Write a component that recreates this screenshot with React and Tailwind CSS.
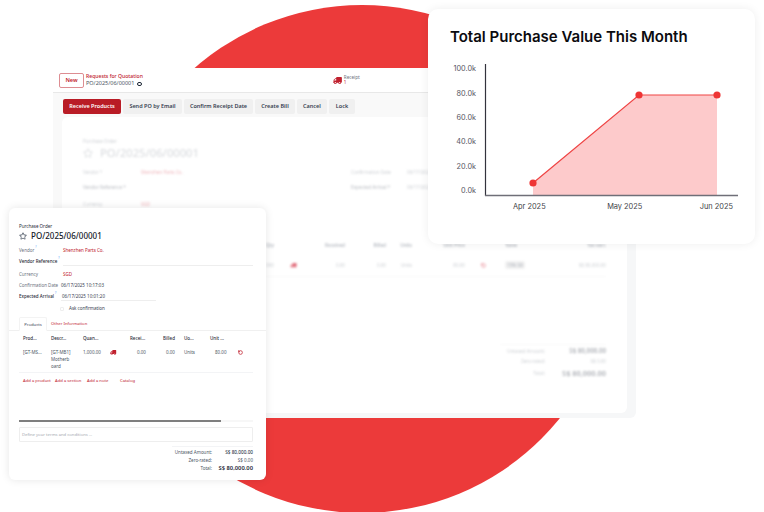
import React from "react";
import { FaTruck, FaRegStar } from "react-icons/fa";
import { RotateCcw } from "lucide-react";

function Chart() {
  const yLabels = [["100.0k", 71.3], ["80.0k", 96], ["60.0k", 120.3], ["40.0k", 144.3], ["20.0k", 168.7], ["0.0k", 193]];
  const xLabels = [["Apr 2025", 104.3], ["May 2025", 199.7], ["Jun 2025", 291.3]];
  return (
    <svg viewBox="0 0 339 250" className="absolute left-[-3px] top-[-9px] h-[250px] w-[339px]">
      <polygon points="108,183 214,95 292,95 292,195 108,195" fill="#fdcacb" />
      <polyline points="108,183 214,95 292,95" fill="none" stroke="#ef4444" strokeWidth="1.2" />
      <circle cx="108" cy="183" r="3.6" fill="#ee3535" />
      <circle cx="214" cy="95" r="3.6" fill="#ee3535" />
      <circle cx="292" cy="95" r="3.6" fill="#ee3535" />
      <path d="M60.5 64V196" stroke="#33333d" strokeWidth="1.2" fill="none" />
      <path d="M60 195.5H313" stroke="#6f6f78" strokeWidth="1.5" fill="none" />
      {yLabels.map(([t, y]) => (
        <text key={t} x="51" y={y} textAnchor="end" fontSize="7.3" fill="#55555f" fontFamily="Inter, sans-serif">{t}</text>
      ))}
      {xLabels.map(([t, x]) => (
        <text key={t} x={x} y="208.5" textAnchor="middle" fontSize="7.4" fill="#3f3f48" fontFamily="Inter, sans-serif">{t}</text>
      ))}
    </svg>
  );
}

function Btn({ children, primary, w }) {
  return (
    <div className={`flex h-[15px] items-center justify-center rounded-[2px] text-[5.5px] font-semibold ${w} ${primary ? "bg-[#b91c26] text-white" : "bg-[#f0f0f0] text-[#374151]"}`}>
      {children}
    </div>
  );
}

function BlurredForm() {
  return (
    <div className="mt-[3px] ml-[9px] h-[296px] rounded-[6px] bg-white pl-[21px] pr-[21px] pt-[20px]">
      <div className="text-[4.6px] leading-[8px] text-[#b5b9c0] blur-[1.1px]">
        <div className="text-[#ced1d5]">Purchase Order</div>
        <div className="mt-[1px] flex h-[14px] items-center gap-[7px] text-[11.2px] font-medium text-[#dcdee1]">
          <FaRegStar className="h-[10px] w-[10px]" />
          PO/2025/06/00001
        </div>
        <div className="mt-[8px] grid grid-cols-[58px_210px_56px_1fr] text-[#ced1d5]">
          <span>Vendor *</span>
          <span className="text-[#eeb5bb]">Shenzhen Parts Co.</span>
          <span>Confirmation Date</span>
          <span>06/17/2025 10:17:03</span>
        </div>
        <div className="mt-[7px] grid grid-cols-[58px_210px_56px_1fr] font-medium text-[#c0c3c8]">
          <span>Vendor Reference *</span>
          <span />
          <span>Expected Arrival *</span>
          <span className="font-normal text-[#ced1d5]">06/17/2025 10:01:20</span>
        </div>
        <div className="mt-[9px] grid grid-cols-[58px_1fr] text-[#ced1d5]">
          <span>Currency</span>
          <span className="text-[#eeb5bb]">SGD</span>
        </div>
        <div className="ml-[183px] mt-[32px] grid h-[10px] grid-cols-[24px_55px_41px_26px_53px_40px_40px_61px] items-center font-semibold">
          <span>Qty</span>
          <span className="text-right">Received</span>
          <span className="text-right">Billed</span>
          <span className="text-right">Units</span>
          <span className="text-right">Unit Price</span>
          <span />
          <span>Taxes</span>
          <span className="text-right">Tax excl.</span>
        </div>
        <div className="ml-[183px] mt-[10px] grid h-[10px] grid-cols-[24px_55px_41px_26px_53px_40px_40px_61px] items-center text-[#ced1d5]">
          <span>000</span>
          <span className="flex items-center justify-between">
            <FaTruck className="h-[5px] w-[7px] -scale-x-100 text-[#e2707e]" />
            0.00
          </span>
          <span className="text-right">0.00</span>
          <span className="text-right">Units</span>
          <span className="text-right">80.00</span>
          <span className="pl-[16px]"><RotateCcw className="h-[5px] w-[5px] text-[#e2707e]" strokeWidth={3} /></span>
          <span><span className="rounded-[2px] bg-[#f1f1f1] px-[2px] py-[1px] font-medium text-[#b5b9c0]">15% SR</span></span>
          <span className="text-right">S$ 80,000.00</span>
        </div>
        <div className="ml-[183px] mt-[6px] h-px w-[340px] bg-[#f8f8f8]" />
        <div className="ml-auto mt-[67px] w-[106px] border-t border-[#f8f8f8] pt-[2px]">
          <div className="grid grid-cols-[45px_61px] text-right">
            <span className="text-[#ced1d5]">Untaxed Amount:</span>
            <span className="text-[6.2px] font-semibold text-[#adb0b6]">S$ 80,000.00</span>
          </div>
          <div className="mt-[2px] grid grid-cols-[45px_61px] text-right text-[#ced1d5]">
            <span>Zero-rated:</span>
            <span>S$ 0.00</span>
          </div>
          <div className="mt-[4px] grid grid-cols-[45px_61px] text-right">
            <span className="text-[#ced1d5]">Total:</span>
            <span className="text-[7.4px] font-semibold text-[#adb0b6]">S$ 80,000.00</span>
          </div>
        </div>
      </div>
    </div>
  );
}

function BackWindow() {
  return (
    <div className="absolute left-[53px] top-[68px] h-[345px] w-[574px] rounded-br-[6px] bg-[#f9f9f9] shadow-[9px_5px_0_#f6f7f8] [font-family:'Noto_Sans',sans-serif]">
      <div className="flex h-[25px] items-center border-b border-[#e8e8e8] bg-white pl-[6px]">
        <div className="flex h-[15px] w-[25px] items-center justify-center rounded-[2px] border border-[#dd8d92] text-[5.6px] font-semibold text-[#c0202e]">New</div>
        <div className="ml-[2px] flex flex-col text-[5.1px] leading-[7.5px]">
          <span className="font-medium text-[#c0202e]">Requests for Quotation</span>
          <span className="flex items-center gap-[3px] text-[5.5px] text-[#4b5563]">
            PO/2025/06/00001
            <span className="inline-block h-[4.5px] w-[4.5px] rounded-full border-[1.4px] border-[#1f2937]" />
          </span>
        </div>
        <div className="ml-[190px] flex items-center gap-[2px]">
          <FaTruck className="h-[7px] w-[9px] -scale-x-100 text-[#c0202e]" />
          <div className="flex flex-col text-[4.6px] leading-[5.5px] text-[#6b7280]">
            <span>Receipt</span>
            <span className="text-[#c0202e]">1</span>
          </div>
        </div>
      </div>
      <div className="flex gap-[2px] pl-[10px] pt-[6px]">
        <Btn primary w="w-[58px]">Receive Products</Btn>
        <Btn w="w-[59px]">Send PO by Email</Btn>
        <Btn w="w-[69px]">Confirm Receipt Date</Btn>
        <Btn w="w-[40px]">Create Bill</Btn>
        <Btn w="w-[30px]">Cancel</Btn>
        <Btn w="w-[26px]">Lock</Btn>
      </div>
      <BlurredForm />
    </div>
  );
}

function Req() {
  return <sup className="ml-[1px] align-super text-[3px] leading-none text-[#60a5fa]">?</sup>;
}

function Field({ label, strong, req, underline, children }) {
  return (
    <div className="grid h-[11px] grid-cols-[44px_1fr] items-center">
      <span className={`whitespace-nowrap ${strong ? "font-medium text-[#1f2937]" : "text-[#6b7280]"}`}>
        {label}
        {req && <Req />}
      </span>
      <span className={underline ? "border-b border-[#eeeeee]" : ""}>{children}</span>
    </div>
  );
}

const tableCols = "grid-cols-[28px_32px_27px_20px_33px_21px_26px_28px_15px]";

function FrontForm() {
  return (
    <div className="absolute left-[9px] top-[208px] h-[272px] w-[257px] rounded-[6px] bg-white text-[4.5px] leading-[7px] text-[#4b5563] shadow-[0_0_9px_rgba(0,0,0,0.1)] [font-family:'Noto_Sans',sans-serif]">
      <div className="pl-[10px] pr-[13px] pt-[15px]">
        <div className="text-[#1f2937]">Purchase Order</div>
        <div className="flex h-[11px] items-center gap-[4px] text-[8px] font-medium text-[#111827]">
          <FaRegStar className="h-[8px] w-[8px] text-[#4b5563]" />
          PO/2025/06/00001
        </div>
        <div className="mt-[4px]">
          <Field label="Vendor" req><span className="text-[#c0202e]">Shenzhen Parts Co.</span></Field>
          <Field label="Vendor Reference" strong req underline>&nbsp;</Field>
          <div className="mt-[2px]" />
          <Field label="Currency"><span className="text-[#c0202e]">SGD</span></Field>
          <Field label="Confirmation Date"><span className="-ml-[2px] block text-[#374151]">06/17/2025 10:17:03</span></Field>
          <div className="grid h-[11px] grid-cols-[42px_95px] items-center">
            <span className="whitespace-nowrap font-medium text-[#1f2937]">Expected Arrival<Req /></span>
            <span className="border-b border-[#eeeeee] pl-[1px] text-[#374151]">06/17/2025 10:01:20</span>
          </div>
          <div className="ml-[41px] flex h-[13px] items-center gap-[5px] text-[#374151]">
            <span className="h-[4px] w-[4px] rounded-[1px] border border-[#eeeeee]" />
            Ask confirmation
          </div>
        </div>
      </div>

      <div className="mt-[2px] flex h-[14px] border-b border-[#f0f0f0] pl-[10px] text-[4.2px]">
        <div className="flex h-[14px] w-[28px] items-center justify-center rounded-t-[2px] border border-[#f3f3f3] border-b-white bg-white text-[#374151]">Products</div>
        <div className="ml-[4px] flex items-center text-[#c0202e]">Other Information</div>
      </div>

      <div className="pl-[14px]">
        <div className={`grid h-[14px] ${tableCols} items-center font-medium text-[#1f2937]`}>
          <span>Prod...</span><span>Descr...</span><span>Quan...</span><span />
          <span>Recei...</span><span>Billed</span><span>Uo...</span><span>Unit ...</span><span />
        </div>
        <div className={`grid ${tableCols} pt-[4px] text-[#4b5563]`}>
          <span>[GT-MS...</span>
          <span>[GT-MB1]<br />Motherb<br />oard</span>
          <span>1,000.00</span>
          <span className="pt-[1px]"><FaTruck className="h-[5px] w-[6.5px] -scale-x-100 text-[#c0202e]" /></span>
          <span className="pl-[7px]">0.00</span>
          <span className="pl-[3px]">0.00</span>
          <span>Units</span>
          <span className="pl-[5px]">80.00</span>
          <span className="pt-[1px]"><RotateCcw className="h-[5px] w-[5px] text-[#c0202e]" strokeWidth={3.5} /></span>
        </div>
      </div>
      <div className="ml-[10px] mr-[13px] mt-[2px] h-px bg-[#f3f4f6]" />
      <div className="flex h-[15px] items-center pl-[14px] text-[4.2px] text-[#c0202e]">
        <span className="w-[32px]">Add a product</span>
        <span className="w-[32px]">Add a section</span>
        <span className="w-[33px]">Add a note</span>
        <span>Catalog</span>
      </div>

      <div className="ml-[10px] mr-[13px] mt-[32px] h-[2px] bg-[#f7f7f7]">
        <div className="h-[2px] w-[202px] bg-[#7f7f7f]" />
      </div>
      <div className="ml-[10px] mr-[13px] mt-[5px] flex h-[15px] items-center rounded-[1px] border border-[#eeeeee] pl-[2px] text-[4.2px] text-[#a3a7ae]">
        Define your terms and conditions ...
      </div>
      <div className="ml-auto mr-[13px] mt-[4px] w-[81px] border-t border-[#f3f4f6] pt-[1px]">
        <div className="grid h-[8px] grid-cols-[40px_41px] items-center text-right">
          <span>Untaxed Amount:</span>
          <span className="text-[4.7px] font-medium text-[#374151]">S$ 80,000.00</span>
        </div>
        <div className="grid h-[8px] grid-cols-[40px_41px] items-center text-right">
          <span>Zero-rated:</span>
          <span>S$ 0.00</span>
        </div>
        <div className="grid h-[8px] grid-cols-[40px_41px] items-center text-right">
          <span>Total:</span>
          <span className="text-[5.8px] font-semibold text-[#1f2937]">S$ 80,000.00</span>
        </div>
      </div>
    </div>
  );
}

export default function App() {
  return (
    <div className="relative h-[512px] w-[764px] overflow-hidden bg-white">
      <div className="absolute left-[108px] top-[5px] h-[508px] w-[508px] rounded-full bg-[#ec3a3a]" />
      <BackWindow />
      <FrontForm />
      <div className="absolute left-[428px] top-[9px] h-[235px] w-[327px] rounded-[10px] bg-white shadow-[0_0_10px_rgba(0,0,0,0.07)]">
        <Chart />
        <div className="absolute left-[22px] top-[17px] whitespace-nowrap text-[15px] font-semibold text-[#0b0b0f] [font-family:Inter,sans-serif]">Total Purchase Value This Month</div>
      </div>
    </div>
  );
}
